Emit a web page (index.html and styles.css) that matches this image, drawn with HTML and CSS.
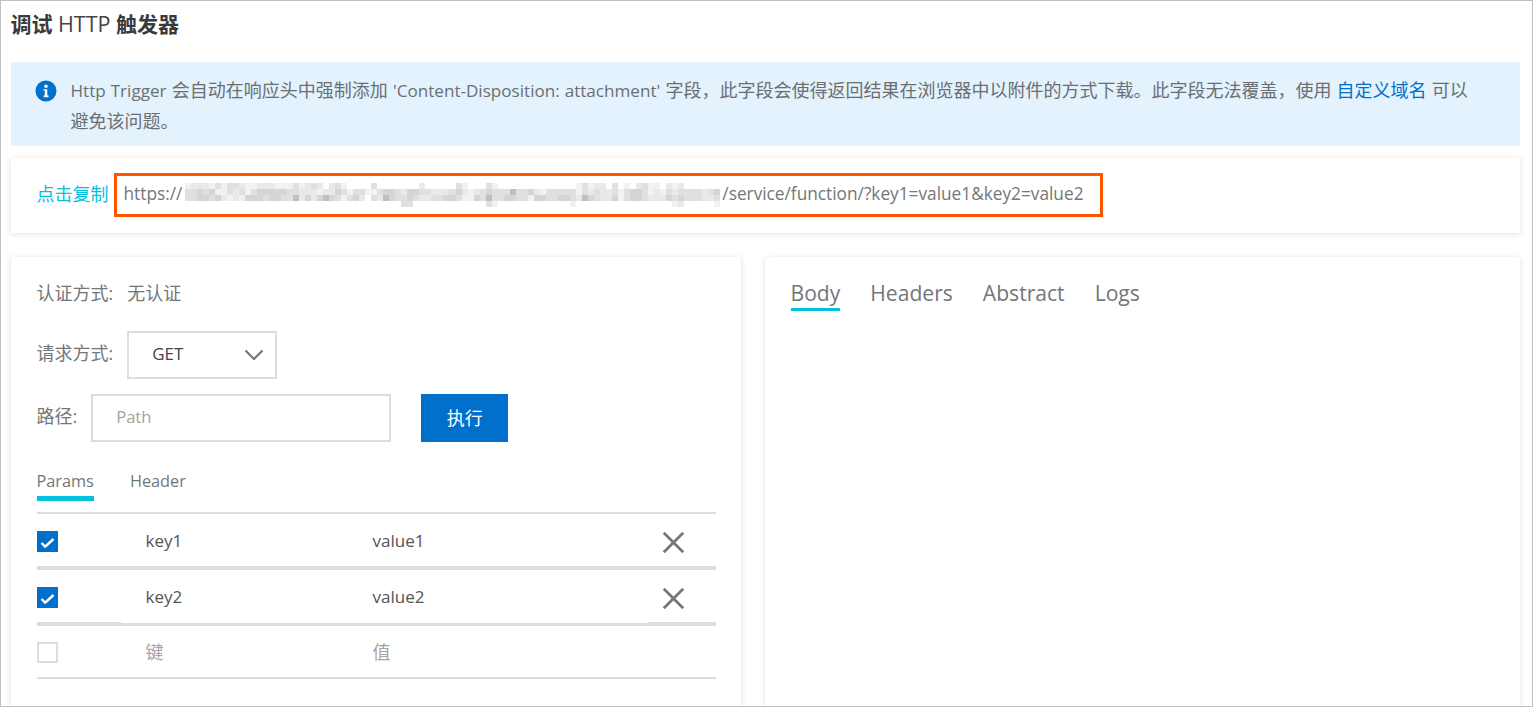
FILE: index.html
```html
<!DOCTYPE html>
<html lang="zh">
<head>
<meta charset="utf-8">
<title>调试 HTTP 触发器</title>
<link rel="stylesheet" href="styles.css">
</head>
<body>
<div class="page">
  <h1 class="title">调试 <span class="title-latin">HTTP</span> 触发器</h1>
  <div class="notice">
    <svg class="notice-icon" viewBox="0 0 22 22" width="22" height="22"><circle cx="11" cy="11" r="10.5" fill="#0070cc"/><circle cx="11" cy="6.2" r="1.7" fill="#fff"/><path d="M8.6 9.2h3.7v6.4h1.2v1.6H8.6v-1.6h1.2v-4.8H8.6z" fill="#fff"/></svg>
    <p class="notice-text"><span class="latin">Http Trigger</span> 会自动在响应头中强制添加 <span class="latin">'Content-Disposition: attachment'</span> 字段，此字段会使得返回结果在浏览器中以附件的方式下载。此字段无法覆盖，使用 <a class="link">自定义域名</a> 可以避免该问题。</p>
  </div>
  <div class="card url-card">
    <a class="copy">点击复制</a>
    <div class="url-box">
      <span class="url-text">https://</span>
      <svg class="blur" width="535" height="24" viewBox="0 0 89 4" preserveAspectRatio="none" shape-rendering="crispEdges" fill="none" aria-hidden="true">
        <path stroke="#f2f2f2" d="M0 .5h1M4 .5h1M6 .5h1M10 .5h2M15 .5h3M19 .5h1M26 .5h1M46 .5h1M51 .5h1M65 .5h1M67 .5h1M73 .5h1M77 .5h2M81 .5h1M5 1.5h2M10 1.5h1M22 1.5h1M27 1.5h1M30 1.5h2M47 1.5h1M59 1.5h1M65 1.5h1M72 1.5h1M77 1.5h1M79 1.5h1M7 2.5h1M9 2.5h1M26 2.5h1M46 2.5h2M57 2.5h1M72 2.5h1M51 3.5h1M64 3.5h1M81 3.5h1M88 3.5h1"/>
        <path stroke="#e9e9e9" d="M1 .5h3M9 .5h1M12 .5h3M20 .5h1M22 .5h1M24 .5h1M39 .5h1M68 .5h2M75 .5h1M80 .5h1M82 .5h1M8 1.5h1M19 1.5h3M23 1.5h2M36 1.5h1M41 1.5h3M46 1.5h1M48 1.5h1M58 1.5h1M67 1.5h1M69 1.5h2M78 1.5h1M81 1.5h1M86 1.5h1M6 2.5h1M8 2.5h1M19 2.5h1M21 2.5h1M29 2.5h1M32 2.5h1M39 2.5h2M65 2.5h1M69 2.5h2M77 2.5h3M86 2.5h2M82 3.5h1"/>
        <path stroke="#e0e0e0" d="M5 .5h1M7 .5h2M18 .5h1M21 .5h1M25 .5h1M31 .5h1M45 .5h1M50 .5h1M66 .5h1M71 .5h1M76 .5h1M0 1.5h2M3 1.5h1M7 1.5h1M9 1.5h1M11 1.5h1M17 1.5h2M26 1.5h1M28 1.5h2M32 1.5h1M35 1.5h1M39 1.5h2M44 1.5h1M49 1.5h1M51 1.5h3M55 1.5h2M60 1.5h5M66 1.5h1M68 1.5h1M71 1.5h1M73 1.5h1M76 1.5h1M80 1.5h1M82 1.5h4M87 1.5h1M0 2.5h2M4 2.5h1M13 2.5h1M16 2.5h2M25 2.5h1M27 2.5h1M31 2.5h1M35 2.5h2M38 2.5h1M41 2.5h2M45 2.5h1M49 2.5h1M51 2.5h2M55 2.5h2M60 2.5h2M64 2.5h1M68 2.5h1M73 2.5h1M76 2.5h1M81 2.5h1M83 2.5h3M88 2.5h1M36 3.5h2M50 3.5h1"/>
        <path stroke="#d5d5d5" d="M2 1.5h1M4 1.5h1M12 1.5h5M25 1.5h1M33 1.5h2M37 1.5h2M45 1.5h1M50 1.5h1M57 1.5h1M74 1.5h2M88 1.5h1M2 2.5h2M5 2.5h1M10 2.5h3M14 2.5h2M20 2.5h1M22 2.5h1M24 2.5h1M28 2.5h1M34 2.5h1M37 2.5h1M43 2.5h2M48 2.5h1M53 2.5h2M58 2.5h2M62 2.5h2M67 2.5h1M71 2.5h1M74 2.5h2M80 2.5h1M82 2.5h1"/>
        <path stroke="#bfbfbf" d="M54 1.5h1M18 2.5h1M23 2.5h1M33 2.5h1M50 2.5h1M66 2.5h1"/>
      </svg>
      <span class="url-text">/service/function/?key1=value1&amp;key2=value2</span>
    </div>
  </div>
  <div class="panels">
    <section class="card panel-left">
      <div class="form-row auth"><span>认证方式:</span><span>无认证</span></div>
      <div class="form-row method">
        <span class="label">请求方式:</span>
        <div class="select"><span class="select-value">GET</span><svg width="20" height="12" viewBox="0 0 20 12"><path d="M1.5 1.5 10 10l8.5-8.5" fill="none" stroke="#73777a" stroke-width="2.2"/></svg></div>
      </div>
      <div class="form-row path">
        <span class="label">路径:</span>
        <div class="input">Path</div>
        <button class="run">执行</button>
      </div>
      <div class="tabs small">
        <span class="tab active">Params</span><span class="tab">Header</span>
      </div>
      <div class="table">
        <div class="cell cell-check"><span class="check on"><svg width="15" height="10" viewBox="0 0 15 10"><path d="M1.5 5 5.2 8.7 13.5 1" fill="none" stroke="#fff" stroke-width="2.4"/></svg></span></div>
        <div class="cell text">key1</div><div class="cell text">value1</div>
        <div class="cell cell-x"><svg width="21" height="21" viewBox="0 0 21 21"><path d="M.8.8l19.4 19.4M20.2.8.8 20.2" stroke="#73777a" stroke-width="2.8"/></svg></div>

        <div class="cell cell-check"><span class="check on"><svg width="15" height="10" viewBox="0 0 15 10"><path d="M1.5 5 5.2 8.7 13.5 1" fill="none" stroke="#fff" stroke-width="2.4"/></svg></span></div>
        <div class="cell text thin">key2</div><div class="cell text thin">value2</div>
        <div class="cell cell-x"><svg width="21" height="21" viewBox="0 0 21 21"><path d="M.8.8l19.4 19.4M20.2.8.8 20.2" stroke="#73777a" stroke-width="2.8"/></svg></div>

        <div class="cell cell-check third"><span class="check"></span></div>
        <div class="cell third ph">键</div><div class="cell third ph">值</div>
        <div class="cell third"></div>
      </div>
    </section>
    <section class="card panel-right">
      <div class="tabs large">
        <span class="tab active">Body</span><span class="tab">Headers</span><span class="tab">Abstract</span><span class="tab">Logs</span>
      </div>
    </section>
  </div>
</div>
</body>
</html>
```
FILE: styles.css
```css
* { box-sizing: border-box; }
html, body { margin: 0; height: 100%; }
body { overflow: hidden; background: #fff; font-family: "Open Sans", "Noto Sans CJK SC", sans-serif; color: #73777a; font-size: 18px; }
.page { height: 707px; border: 1.5px solid #bfbfbf; border-right-width: 1px; padding: 0 12px 0 9.5px; overflow: hidden; display: flex; flex-direction: column; }
.title { margin: 0; padding-top: 8px; height: 60.5px; font-size: 21px; line-height: 30px; font-weight: 700; color: #3a3a3a; }
.title-latin { font-weight: 400; font-size: 21.5px; color: #444; }
.notice { height: 84px; background: #e3f2fd; display: flex; padding: 13px 50px 0 24px; gap: 14px; }
.notice-icon { flex: none; margin-top: 5px; }
.notice-text { margin: 0; font-size: 18px; line-height: 30.5px; color: #6b6f72; word-spacing: .5px; }
.latin { font-size: 17.1px; }
.link { color: #0070cc; }
.card { background: #fff; box-shadow: 0 1px 6px rgba(0,0,0,.12); }
.url-card { margin-top: 12px; height: 75px; display: flex; align-items: center; padding: 0 0 1px 26px; gap: 5px; }
.copy { color: #00c1de; padding-bottom: 3px; }
.url-box { width: 989px; height: 44px; border: 3px solid #f50; display: flex; align-items: center; padding-left: 7px; }
.url-text { font-size: 17.25px; white-space: nowrap; padding-bottom: 2px; }
.blur { flex: none; margin: 0 2px 0 3px; }
.panels { margin-top: 24px; flex: 1; display: flex; gap: 24px; min-height: 0; }
.panel-left { width: 730px; padding: 20px 25px 0 26px; }
.panel-right { flex: 1; padding: 18px 26px; }
.form-row { display: flex; align-items: center; }
.auth { height: 30px; gap: 14px; }
.method { margin-top: 24px; height: 48px; gap: 14px; }
.label { padding-bottom: 6px; }
.select { width: 150px; height: 48px; border: 2px solid #ddd; display: flex; align-items: center; justify-content: space-between; padding: 0 11px 0 23px; color: #444; }
.select-value { font-size: 17px; padding-bottom: 2px; }
.path { margin-top: 15px; height: 48px; }
.input { width: 300px; height: 48px; margin-left: 14px; border: 2px solid #ddd; padding-left: 23px; line-height: 42px; color: #a3a3a3; font-size: 16.5px; }
.run { margin-left: 30px; width: 87px; height: 48px; border: 0; padding: 0 0 2px; background: #0070cc; color: #fff; font: inherit; }
.tabs { display: flex; }
.tabs.small { margin-top: 24px; gap: 36px; height: 34px; font-size: 16.3px; }
.tabs.large { gap: 30px; font-size: 21.1px; }
.tab { display: block; height: 35px; line-height: 30px; }
.tabs.small .tab.active { border-bottom: 5px solid #00c1de; }
.tabs.large .tab { height: 36px; line-height: 36px; }
.tabs.large .tab.active { border-bottom: 3px solid #00c1de; }
.table { margin-top: 12px; border-top: 2px solid #ddd; display: grid; grid-template-columns: 84px 227px 300px 68px; }
.cell { height: 56px; border-bottom: 4px solid #ddd; display: flex; align-items: center; padding-left: 25px; color: #555; }
.text { font-size: 17px; padding-top: 2px; }
.cell-check { padding: 4px 0 0; }
.cell-x { padding: 6px 0 0 15px; }
.thin { border-bottom-width: 3px; padding-top: 0; }
.cell-check.third { padding-top: 3px; }
.third { border-bottom-width: 2px; height: 53px; }
.ph { color: #a3a3a3; }
.check { width: 21px; height: 21px; border: 2px solid #ddd; display: flex; align-items: center; justify-content: center; }
.check.on { background: #0070cc; border: 0; padding-top: 3px; }
```
